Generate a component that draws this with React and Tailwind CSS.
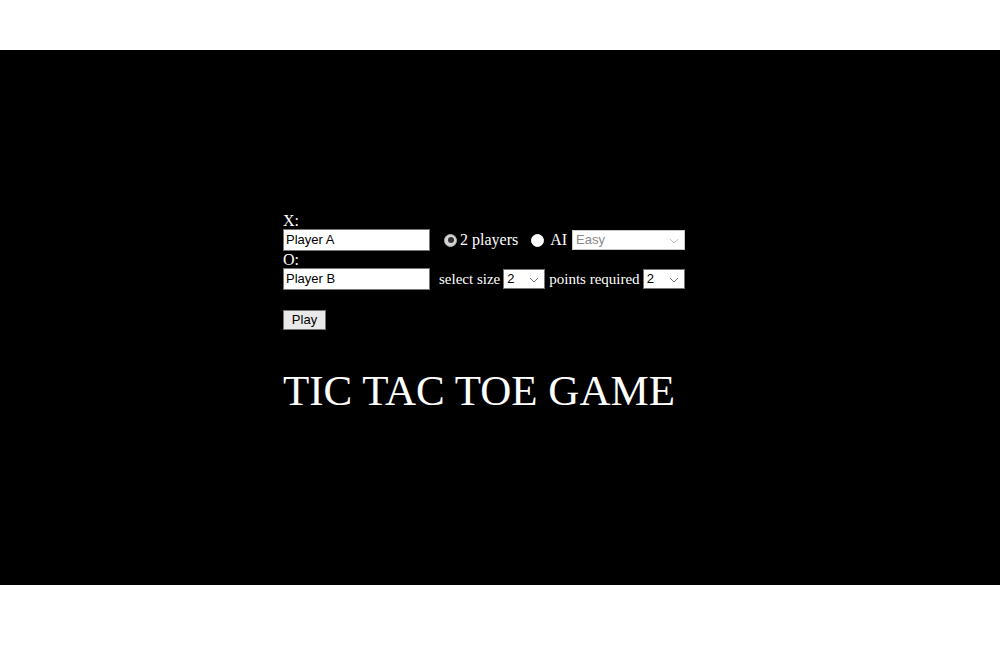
import React from "react";

function Radio({ checked }) {
  return (
    <span
      className={
        "inline-block w-[13px] h-[13px] rounded-full box-border " +
        (checked ? "bg-[#d4d4d4] border border-[#b0b0b0] relative" : "bg-white border border-white")
      }
    >
      {checked && (
        <span className="absolute left-[2.5px] top-[2.5px] w-[6px] h-[6px] rounded-full bg-[#333333]" />
      )}
    </span>
  );
}

function Chevron({ color = "#6d6d6d" }) {
  return (
    <svg width="10" height="6" viewBox="0 0 10 6" className="absolute right-[5px] top-[7px]">
      <path d="M1 1 L5 5 L9 1" fill="none" stroke={color} strokeWidth="1" />
    </svg>
  );
}

function Select({ value, width, disabled }) {
  return (
    <span
      className={
        "relative inline-block h-[20px] box-border border bg-white font-['Liberation_Sans',Arial,sans-serif] text-[13px] leading-[18px] pl-[3px] " +
        (disabled ? "border-[#c8c8c8] text-[#8a8a8a]" : "border-[#767676] text-black")
      }
      style={{ width }}
    >
      {value}
      <Chevron color={disabled ? "#c0c0c0" : "#6d6d6d"} />
    </span>
  );
}

function TextBox({ value }) {
  return (
    <span className="inline-block w-[147px] h-[22px] box-border border border-[#767676] bg-white text-black font-['Liberation_Sans',Arial,sans-serif] text-[13px] leading-[20px] pl-[2px]">
      {value}
    </span>
  );
}

export default function App() {
  return (
    <div className="bg-white w-[1000px] h-[650px] pt-[50px] font-['Liberation_Serif','Times_New_Roman',serif] text-[16px]">
      <div className="bg-black h-[535px] text-white pl-[283px] pt-[162px]">
        <div className="leading-[17px] h-[17px]">X:</div>
        <div className="flex items-center h-[22px]">
          <TextBox value="Player A" />
          <span className="ml-[14px] flex items-center">
            <Radio checked />
          </span>
          <span className="ml-[3px] leading-[18px]">2 players</span>
          <span className="ml-[13px] flex items-center">
            <Radio />
          </span>
          <span className="ml-[6px] leading-[18px]">AI</span>
          <span className="ml-[5px] flex items-center">
            <Select value="Easy" width={113} disabled />
          </span>
        </div>
        <div className="leading-[17px] h-[17px]">O:</div>
        <div className="flex items-center h-[22px]">
          <TextBox value="Player B" />
          <span className="ml-[9px] leading-[18px] text-[15px]">select size</span>
          <span className="ml-[3px] flex items-center">
            <Select value="2" width={42} />
          </span>
          <span className="ml-[4px] leading-[18px] text-[15px]">points required</span>
          <span className="ml-[3px] flex items-center">
            <Select value="2" width={42} />
          </span>
        </div>
        <div className="mt-[17px]">
          <span className="inline-block w-[43px] h-[20px] box-border border border-[#767676] bg-[#e9e9e9] text-black font-['Liberation_Sans',Arial,sans-serif] text-[13px] leading-[18px] text-center">
            Play
          </span>
        </div>
        <h1 className="mt-[36px] text-[43px] leading-[48px] font-normal">TIC TAC TOE GAME</h1>
      </div>
    </div>
  );
}
